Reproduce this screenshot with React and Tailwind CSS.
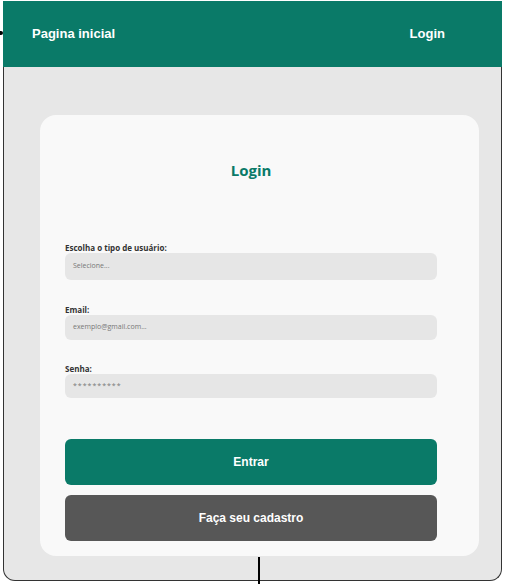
export default function App() {
  const label = "block text-[8px] font-bold text-[#333] leading-[10px]";
  const input =
    "w-full rounded-[6px] bg-[#e6e6e6] text-[7px] text-[#777] px-[8px] flex items-center";
  return (
    <div className="w-[505px] h-[584px] bg-white relative overflow-hidden" style={{ fontFamily: "'Open Sans', sans-serif" }}>
      <div className="absolute left-0 top-[31px] w-[3px] h-[4px] bg-black rounded-r" />
      <div className="ml-[3px] mt-[1px] w-[499px]">
        <header
          className="h-[66px] bg-[#0a7a68] flex items-center justify-between pl-[29px] pr-[57px] text-white font-bold text-[13px]"
          style={{ fontFamily: "'Liberation Sans', Arial, sans-serif" }}
        >
          <span>Pagina inicial</span>
          <span>Login</span>
        </header>
        <main className="h-[514px] bg-[#e7e7e7] border-l border-r border-b border-[#333] rounded-b-[12px] pt-[48px] pl-[36px]">
          <div className="w-[439px] h-[441px] bg-[#f9f9f9] rounded-[16px] pl-[25px] pt-[45px]">
            <div className="w-[372px]">
              <h1 className="text-center text-[15px] font-bold text-[#0a7a68] leading-[20px]">Login</h1>
              <div className="mt-[63px]">
                <label className={label}>Escolha o tipo de usuário:</label>
                <div className={input + " h-[27px]"}>Selecione...</div>
              </div>
              <div className="mt-[25px]">
                <label className={label}>Email:</label>
                <div className={input + " h-[25px]"}>exemplo@gmail.com...</div>
              </div>
              <div className="mt-[24px]">
                <label className={label}>Senha:</label>
                <div className={input + " h-[24px] tracking-[1px]"}>**********</div>
              </div>
              <div
                className="mt-[41px] flex flex-col gap-[10px] text-white font-bold text-[12px]"
                style={{ fontFamily: "'Liberation Sans', Arial, sans-serif" }}
              >
                <button className="h-[46px] w-full rounded-[6px] bg-[#0a7a68]">Entrar</button>
                <button className="h-[46px] w-full rounded-[6px] bg-[#575757]">Faça seu cadastro</button>
              </div>
            </div>
          </div>
        </main>
      </div>
      <div className="absolute left-[258px] top-[557px] w-[2px] h-[27px] bg-black" />
    </div>
  );
}
